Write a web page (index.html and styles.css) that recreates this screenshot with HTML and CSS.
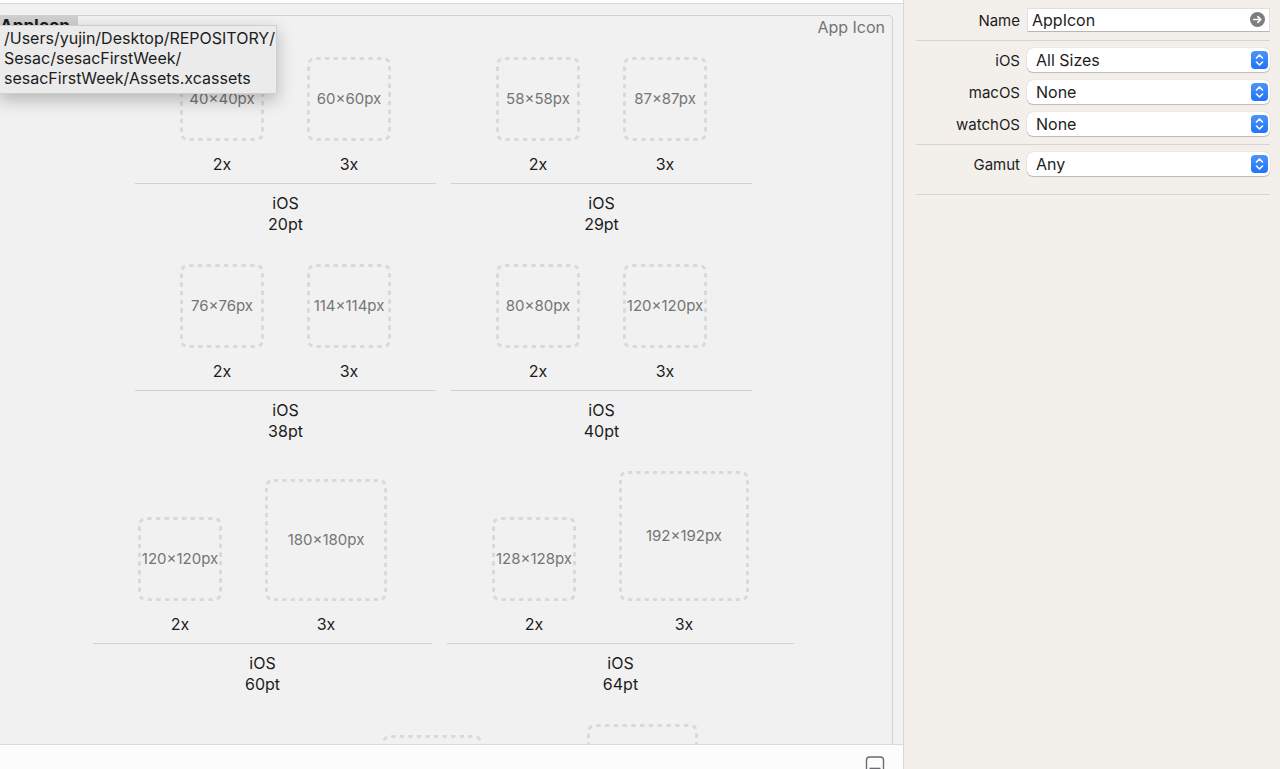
FILE: index.html
```html
<!DOCTYPE html>
<html lang="en">
<head>
    <meta charset="UTF-8">
    <meta name="viewport" content="width=device-width, initial-scale=1.0">
    <title>AppIcon</title>
    <link rel="stylesheet" href="styles.css">
</head>
<body>
    <div class="window">
        <main class="editor">
            <div class="canvas">
                <section class="asset">
                    <header class="asset-header">
                        <h1 class="asset-name">AppIcon</h1>
                        <span class="asset-type">App Icon</span>
                    </header>

                    <div class="row">
                        <div class="group">
                            <div class="slots">
                                <div class="slot">
                                    <div class="well"><svg class="dash"><rect rx="6" pathLength="72"/></svg>40×40px</div>
                                    <span class="scale">2x</span>
                                </div>
                                <div class="slot">
                                    <div class="well"><svg class="dash"><rect rx="6" pathLength="72"/></svg>60×60px</div>
                                    <span class="scale">3x</span>
                                </div>
                            </div>
                            <p class="caption">iOS<br>20pt</p>
                        </div>
                        <div class="group">
                            <div class="slots">
                                <div class="slot">
                                    <div class="well"><svg class="dash"><rect rx="6" pathLength="72"/></svg>58×58px</div>
                                    <span class="scale">2x</span>
                                </div>
                                <div class="slot">
                                    <div class="well"><svg class="dash"><rect rx="6" pathLength="72"/></svg>87×87px</div>
                                    <span class="scale">3x</span>
                                </div>
                            </div>
                            <p class="caption">iOS<br>29pt</p>
                        </div>
                    </div>

                    <div class="row">
                        <div class="group">
                            <div class="slots">
                                <div class="slot">
                                    <div class="well"><svg class="dash"><rect rx="6" pathLength="72"/></svg>76×76px</div>
                                    <span class="scale">2x</span>
                                </div>
                                <div class="slot">
                                    <div class="well"><svg class="dash"><rect rx="6" pathLength="72"/></svg>114×114px</div>
                                    <span class="scale">3x</span>
                                </div>
                            </div>
                            <p class="caption">iOS<br>38pt</p>
                        </div>
                        <div class="group">
                            <div class="slots">
                                <div class="slot">
                                    <div class="well"><svg class="dash"><rect rx="6" pathLength="72"/></svg>80×80px</div>
                                    <span class="scale">2x</span>
                                </div>
                                <div class="slot">
                                    <div class="well"><svg class="dash"><rect rx="6" pathLength="72"/></svg>120×120px</div>
                                    <span class="scale">3x</span>
                                </div>
                            </div>
                            <p class="caption">iOS<br>40pt</p>
                        </div>
                    </div>

                    <div class="row">
                        <div class="group">
                            <div class="slots">
                                <div class="slot">
                                    <div class="well"><svg class="dash"><rect rx="6" pathLength="72"/></svg>120×120px</div>
                                    <span class="scale">2x</span>
                                </div>
                                <div class="slot">
                                    <div class="well well-180"><svg class="dash"><rect rx="6" pathLength="112"/></svg>180×180px</div>
                                    <span class="scale">3x</span>
                                </div>
                            </div>
                            <p class="caption">iOS<br>60pt</p>
                        </div>
                        <div class="group">
                            <div class="slots">
                                <div class="slot">
                                    <div class="well"><svg class="dash"><rect rx="6" pathLength="72"/></svg>128×128px</div>
                                    <span class="scale">2x</span>
                                </div>
                                <div class="slot">
                                    <div class="well well-192"><svg class="dash"><rect rx="6" pathLength="120"/></svg>192×192px</div>
                                    <span class="scale">3x</span>
                                </div>
                            </div>
                            <p class="caption">iOS<br>64pt</p>
                        </div>
                    </div>

                    <!-- continues below the fold -->
                    <div class="row">
                        <div class="group">
                            <div class="slots">
                                <div class="slot">
                                    <div class="well well-136"><svg class="dash"><rect rx="6" pathLength="80"/></svg></div>
                                </div>
                            </div>
                        </div>
                        <div class="group">
                            <div class="slots">
                                <div class="slot">
                                    <div class="well well-152"><svg class="dash"><rect rx="6" pathLength="88"/></svg></div>
                                </div>
                            </div>
                        </div>
                        <div class="group">
                            <div class="slots">
                                <div class="slot">
                                    <div class="well well-167"><svg class="dash"><rect rx="6" pathLength="96"/></svg></div>
                                </div>
                            </div>
                        </div>
                    </div>
                </section>
                <div class="tooltip" role="tooltip">/Users/yujin/Desktop/REPOSITORY/<br>Sesac/sesacFirstWeek/<br>sesacFirstWeek/Assets.xcassets</div>
            </div>

            <footer class="bottom-bar">
                <button class="panel-btn" type="button" aria-label="Toggle panel">
                    <svg width="20" height="20" viewBox="0 0 20 20" fill="none" stroke="#6b6b6d" stroke-width="1.4">
                        <rect x="1.5" y="1" width="17" height="18" rx="3"/>
                        <path d="M4.5 12.4h11"/>
                    </svg>
                </button>
            </footer>
        </main>

        <aside class="inspector">
            <form>
                <div class="section">
                    <div class="field">
                        <label for="name">Name</label>
                        <div class="control">
                            <input class="text-input" type="text" id="name" value="AppIcon">
                            <button class="go-btn" type="button" aria-label="Show">
                                <svg width="15" height="15" viewBox="0 0 15 15">
                                    <circle cx="7.5" cy="7.5" r="7.5" fill="#7d7d7d"/>
                                    <path d="M3.6 7.5h7M7.9 4.6l2.9 2.9-2.9 2.9" fill="none" stroke="#fff" stroke-width="1.6" stroke-linecap="round" stroke-linejoin="round"/>
                                </svg>
                            </button>
                        </div>
                    </div>
                </div>
                <div class="section">
                    <div class="field">
                        <label for="ios">iOS</label>
                        <div class="control">
                            <select class="popup" id="ios">
                                <option>All Sizes</option>
                                <option>Single Size</option>
                                <option>None</option>
                            </select>
                            <svg class="stepper" viewBox="0 0 17 18"><path d="M5.5 7l3-3 3 3M5.5 11l3 3 3-3"/></svg>
                        </div>
                    </div>
                    <div class="field">
                        <label for="macos">macOS</label>
                        <div class="control">
                            <select class="popup" id="macos">
                                <option>None</option>
                                <option>All Sizes</option>
                            </select>
                            <svg class="stepper" viewBox="0 0 17 18"><path d="M5.5 7l3-3 3 3M5.5 11l3 3 3-3"/></svg>
                        </div>
                    </div>
                    <div class="field">
                        <label for="watchos">watchOS</label>
                        <div class="control">
                            <select class="popup" id="watchos">
                                <option>None</option>
                                <option>All Sizes</option>
                            </select>
                            <svg class="stepper" viewBox="0 0 17 18"><path d="M5.5 7l3-3 3 3M5.5 11l3 3 3-3"/></svg>
                        </div>
                    </div>
                </div>
                <div class="section section-last">
                    <div class="field">
                        <label for="gamut">Gamut</label>
                        <div class="control">
                            <select class="popup" id="gamut">
                                <option>Any</option>
                                <option>sRGB and Display P3</option>
                            </select>
                            <svg class="stepper" viewBox="0 0 17 18"><path d="M5.5 7l3-3 3 3M5.5 11l3 3 3-3"/></svg>
                        </div>
                    </div>
                </div>
            </form>
        </aside>
    </div>
</body>
</html>
```
FILE: styles.css
```css
* {
    box-sizing: border-box;
}
body {
    margin: 0;
    font-family: Inter, "Liberation Sans", sans-serif;
    font-size: 16px;
    line-height: 21px;
    color: #1c1c1c;
    background-color: #f1f1f1;
}
.window {
    display: flex;
    height: 100vh;
    overflow: hidden;
}

/* editor */
.editor {
    flex: 1;
    min-width: 0;
    display: flex;
    flex-direction: column;
    border-top: 3px solid #fdfdfd;
}
.canvas {
    position: relative;
    flex: 1;
    min-height: 0;
    overflow: hidden;
    padding: 11px 10px 0 0;
    background-color: #f1f1f1;
    border-top: 1px solid #dadada;
}
.asset {
    margin-left: -6px;
    border: 1px solid #d2d2d2;
    border-radius: 4px;
}
.asset-header {
    display: flex;
    justify-content: space-between;
    height: 41px;
}
.asset-name {
    margin: 0;
    height: 24px;
    padding: 0 8px 0 5px;
    font-size: 17px;
    line-height: 21px;
    font-weight: 700;
    background-color: #d0d0d0;
}
.asset-type {
    padding: 1px 7px 0 0;
    color: #757575;
}
.row {
    display: flex;
    justify-content: center;
    align-items: flex-end;
    gap: 15px;
    margin-bottom: 29px;
}
.slots {
    display: flex;
    align-items: flex-end;
    gap: 43px;
    padding: 0 45px 9px;
    border-bottom: 1px solid #d2d2d2;
}
.slot {
    display: flex;
    flex-direction: column;
    align-items: center;
    gap: 13px;
}
.scale {
    line-height: 20px;
}
.well {
    position: relative;
    display: flex;
    align-items: center;
    justify-content: center;
    width: 84px;
    height: 84px;
    padding-bottom: 2px;
    font-size: 15px;
    white-space: nowrap;
    color: #757575;
}
.well-136 { width: 88px; height: 88px; }
.well-152 { width: 100px; height: 100px; }
.well-167 { width: 111px; height: 111px; }
.well-180 { width: 122px; height: 122px; }
.well-192 { width: 130px; height: 130px; }
.dash {
    position: absolute;
    inset: 0;
    width: 100%;
    height: 100%;
}
.dash rect {
    x: 1.5px;
    y: 1.5px;
    width: calc(100% - 3px);
    height: calc(100% - 3px);
    fill: none;
    stroke: #d9d9d9;
    stroke-width: 3px;
    stroke-dasharray: 1 1;
    stroke-dashoffset: 1.6;
}
.caption {
    margin: 0;
    padding-top: 9px;
    text-align: center;
}
.tooltip {
    position: absolute;
    top: 21px;
    left: -1px;
    padding: 2px 1px 5px 4px;
    line-height: 20px;
    white-space: nowrap;
    background-color: #ebebeb;
    border: 1px solid #cfcfcf;
    box-shadow: 0 6px 16px rgba(0, 0, 0, 0.25);
}
.bottom-bar {
    display: flex;
    justify-content: flex-end;
    align-items: flex-start;
    height: 25px;
    padding: 11px 18px 0;
    overflow: hidden;
    background-color: #fcfcfc;
    border-top: 1px solid #dadada;
}
.panel-btn,
.go-btn {
    padding: 0;
    border: none;
    background: none;
}
.panel-btn svg,
.go-btn svg {
    display: block;
}

/* inspector */
.inspector {
    width: 377px;
    padding: 8px 10px 0 12px;
    background-color: #f3f0eb;
    border-left: 1px solid #d9d6d4;
}
.section {
    display: flex;
    flex-direction: column;
    gap: 8px;
    padding-bottom: 8px;
    margin-bottom: 7px;
    border-bottom: 1px solid #d8d5d1;
}
.section-last {
    padding-bottom: 18px;
}
.field {
    display: flex;
    align-items: center;
    gap: 7px;
}
.field label {
    width: 104px;
    text-align: right;
    font-size: 15px;
}
.control {
    position: relative;
    flex: 1;
    display: flex;
}
.text-input,
.popup {
    width: 100%;
    height: 24px;
    margin: 0;
    font-family: inherit;
    font-size: 16px;
    color: #1c1c1c;
    background-color: #fff;
}
.text-input {
    padding: 0 30px 0 4px;
    border: 1px solid #e2dfdb;
    border-bottom-color: #b9b6b2;
    outline: none;
}
.go-btn {
    position: absolute;
    top: 4px;
    right: 5px;
}
.popup {
    appearance: none;
    padding: 0 30px 0 9px;
    border: none;
    border-radius: 6px;
    box-shadow: 0 0 1px rgba(0, 0, 0, 0.25), 0 1px 1px rgba(0, 0, 0, 0.2);
}
.stepper {
    position: absolute;
    top: 3px;
    right: 2px;
    width: 17px;
    height: 18px;
    border-radius: 4px;
    background: linear-gradient(#4a96f8, #2273f6);
    pointer-events: none;
}
.stepper path {
    fill: none;
    stroke: #fff;
    stroke-width: 1.6;
    stroke-linecap: round;
    stroke-linejoin: round;
}
```
